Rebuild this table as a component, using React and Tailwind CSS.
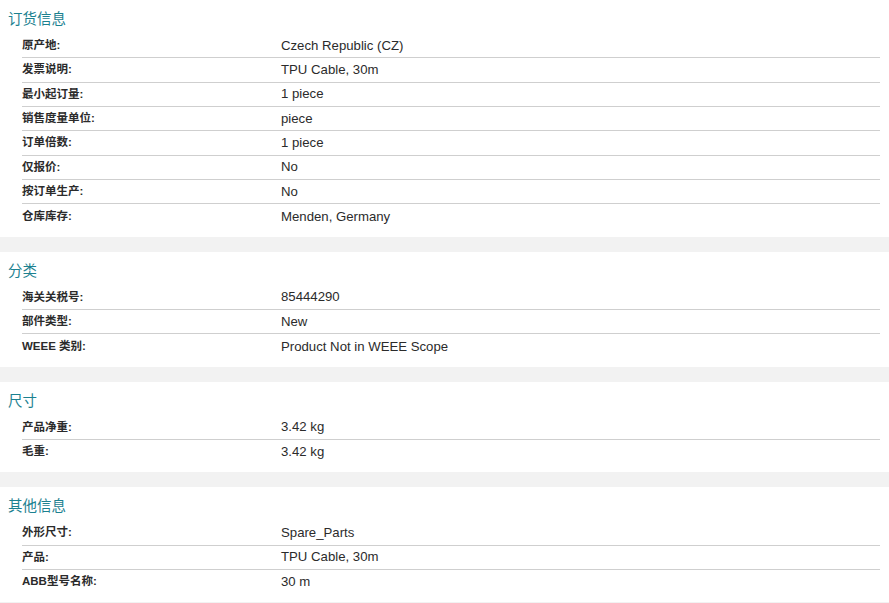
import React from "react";

const sections = [
  {
    title: "订货信息",
    rows: [
      ["原产地:", "Czech Republic (CZ)"],
      ["发票说明:", "TPU Cable, 30m"],
      ["最小起订量:", "1 piece"],
      ["销售度量单位:", "piece"],
      ["订单倍数:", "1 piece"],
      ["仅报价:", "No"],
      ["按订单生产:", "No"],
      ["仓库库存:", "Menden, Germany"],
    ],
  },
  {
    title: "分类",
    rows: [
      ["海关关税号:", "85444290"],
      ["部件类型:", "New"],
      ["WEEE 类别:", "Product Not in WEEE Scope"],
    ],
  },
  {
    title: "尺寸",
    rows: [
      ["产品净重:", "3.42 kg"],
      ["毛重:", "3.42 kg"],
    ],
  },
  {
    title: "其他信息",
    rows: [
      ["外形尺寸:", "Spare_Parts"],
      ["产品:", "TPU Cable, 30m"],
      ["ABB型号名称:", "30 m"],
    ],
  },
];

export default function App() {
  return (
    <div
      className="w-[889px] h-[603px] overflow-hidden bg-white"
      style={{ fontFamily: '"Liberation Sans", Arial, "Noto Sans CJK SC", sans-serif' }}
    >
      {sections.map((s, si) => (
        <div key={si}>
          <div className="pt-2 pb-2">
            <div
              className="pl-2 h-[20px] leading-[20px] text-[14.5px] text-[#1c8190]"
              style={{ fontFamily: '"Noto Sans CJK SC", sans-serif' }}
            >
              {s.title}
            </div>
            <div className="mt-[6px] ml-[22px] mr-[9px]">
              {s.rows.map((r, ri) => (
                <div
                  key={ri}
                  className={
                    "flex items-center h-[24.33px] " +
                    (ri < s.rows.length - 1 ? "border-b border-[#cfcfcf]" : "")
                  }
                >
                  <div className="w-[259px] shrink-0 text-[11.5px] font-bold text-[#2b2b2b]">
                    {r[0]}
                  </div>
                  <div className="text-[13.2px] text-[#2b2b2b]">{r[1]}</div>
                </div>
              ))}
            </div>
          </div>
          <div className="h-[15px] bg-[#f2f2f2]" />
        </div>
      ))}
    </div>
  );
}
